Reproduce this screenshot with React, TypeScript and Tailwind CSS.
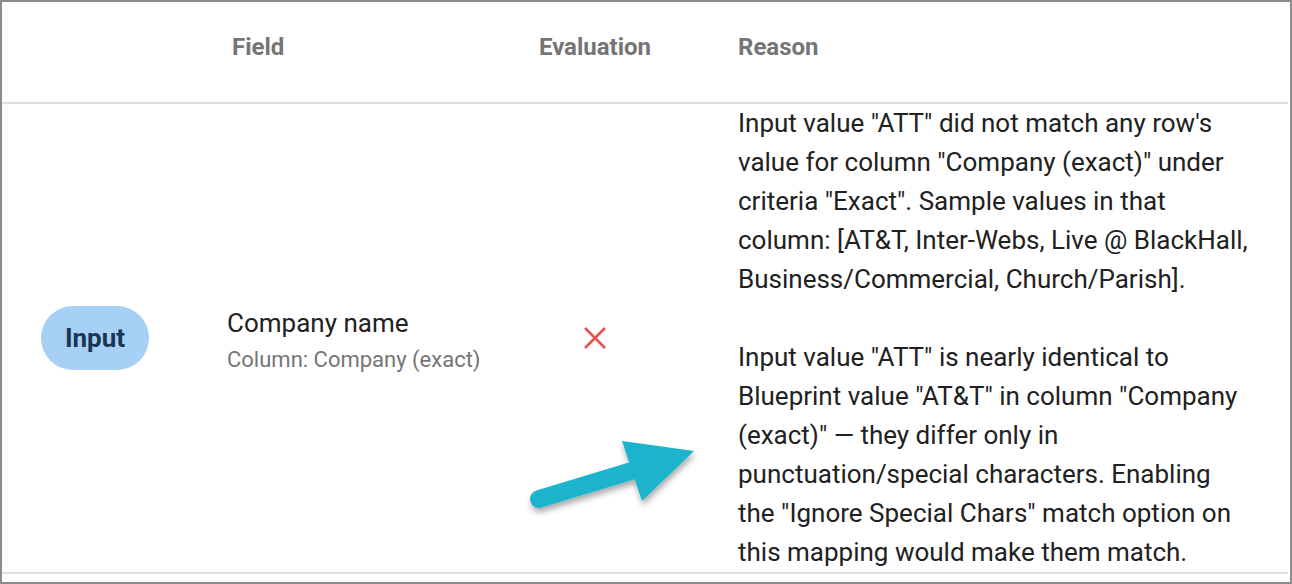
import React from "react";

const reasonLines1 = [
  'Input value "ATT" did not match any row\'s',
  'value for column "Company (exact)" under',
  'criteria "Exact". Sample values in that',
  "column: [AT&T, Inter-Webs, Live @ BlackHall,",
  "Business/Commercial, Church/Parish].",
];
const reasonLines2 = [
  'Input value "ATT" is nearly identical to',
  'Blueprint value "AT&T" in column "Company',
  '(exact)" \u2014 they differ only in',
  "punctuation/special characters. Enabling",
  'the "Ignore Special Chars" match option on',
  "this mapping would make them match.",
];

export default function App() {
  return (
    <div
      className="relative w-[1292px] h-[584px] bg-white border-2 border-[#8c8c8c] overflow-hidden"
      style={{ fontFamily: "Roboto, 'Noto Sans', sans-serif" }}
    >
      <div className="mr-[2px]">
        {/* Header */}
        <div className="flex h-[102px] border-b-2 border-[#e0e0e0] pt-[30px] text-[24px] leading-[30px] font-bold text-[#757575]">
          <div className="w-[225px]" />
          <div className="w-[273px] pl-[5px]">Field</div>
          <div className="w-[190px] text-center">Evaluation</div>
          <div className="pl-[48px]">Reason</div>
        </div>
        {/* Row */}
        <div className="flex border-b-2 border-[#e0e0e0]">
          <div className="w-[225px] flex items-center pl-[39px]">
            <div className="w-[108px] h-[64px] rounded-full bg-[#a6d0f6] flex items-center justify-center text-[26px] font-bold text-[#1b3653]">
              Input
            </div>
          </div>
          <div className="w-[273px] flex flex-col justify-center">
            <div className="text-[26px] leading-[30px] text-[#212121] pt-[4px]">Company name</div>
            <div className="text-[22px] leading-[26px] text-[#757575] mt-[9px]">
              Column: Company (exact)
            </div>
          </div>
          <div className="w-[190px] flex items-center justify-center">
            <svg width="24" height="24" viewBox="0 0 24 24">
              <path d="M2 2 L22 22 M22 2 L2 22" stroke="#e5534b" strokeWidth="2.6" fill="none" />
            </svg>
          </div>
          <div className="pl-[48px] text-[26px] leading-[39px] text-[#212121] whitespace-nowrap">
            {reasonLines1.map((l) => (
              <div key={l}>{l}</div>
            ))}
            <div className="h-[39px]" />
            {reasonLines2.map((l) => (
              <div key={l}>{l}</div>
            ))}
          </div>
        </div>
      </div>
      {/* Arrow overlay */}
      <svg
        className="absolute left-0 top-0 pointer-events-none"
        width="1292"
        height="584"
        viewBox="0 0 1292 584"
      >
        <defs>
          <filter id="sh" x="-20%" y="-20%" width="150%" height="160%">
            <feDropShadow dx="1" dy="4" stdDeviation="3" floodColor="#000" floodOpacity="0.35" />
          </filter>
        </defs>
        <g filter="url(#sh)">
          <line x1="537" y1="497" x2="636" y2="467" stroke="#1fb3cc" strokeWidth="18" strokeLinecap="round" />
          <polygon points="620,439 692,449 640,499" fill="#1fb3cc" />
        </g>
      </svg>
    </div>
  );
}
